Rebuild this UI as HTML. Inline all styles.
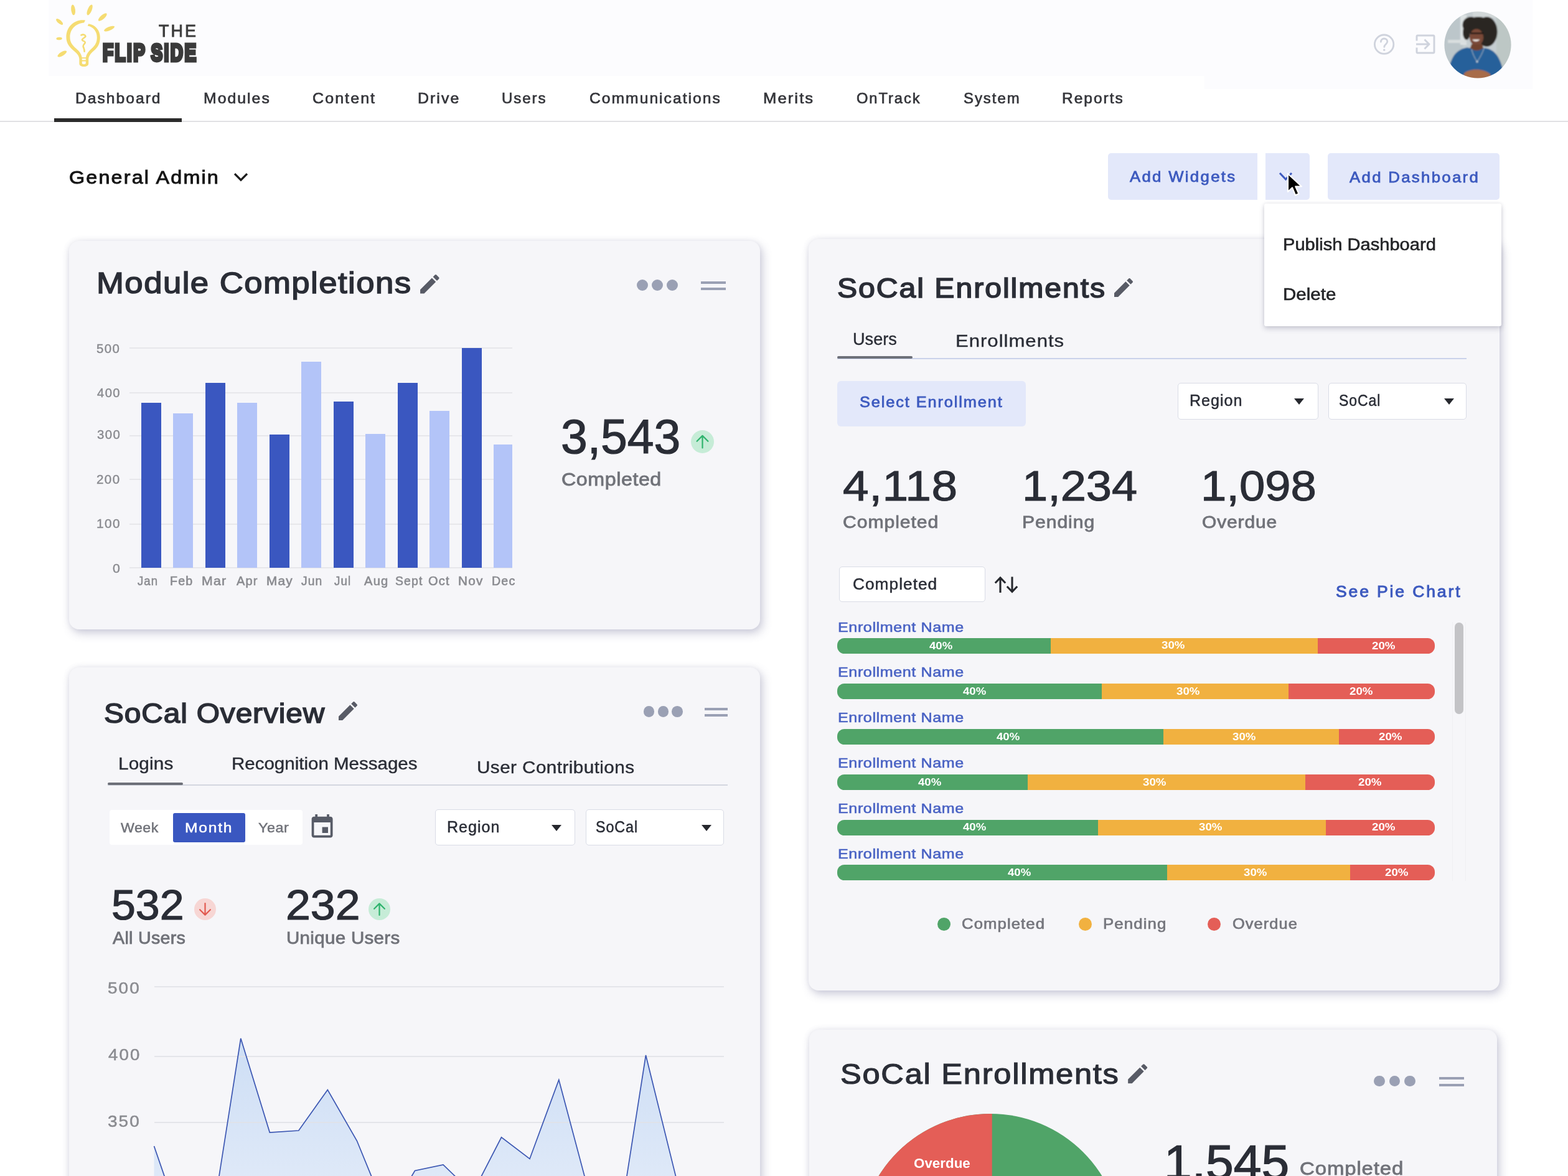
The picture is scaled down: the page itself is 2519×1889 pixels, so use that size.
<!DOCTYPE html>
<html lang="en">
<head>
<meta charset="utf-8">
<title>General Admin Dashboard</title>
<style>
html,body{margin:0;padding:0;background:#fff;}
body{width:2519px;height:1889px;overflow:hidden;position:relative;font-family:"Liberation Sans",sans-serif;}
#app{position:absolute;left:0;top:0;width:2519px;height:1889px;overflow:hidden;}
#app div,#app .t,#app svg{position:absolute;}
header,nav,main,section,aside{display:block;margin:0;padding:0;}
.t{white-space:nowrap;line-height:1;display:block;transform-origin:0 0;margin:0;padding:0;font-weight:400;text-decoration:none;}
.card{background:#f6f6f9;border-radius:16px;box-shadow:4px 6px 15px rgba(95,95,140,.31),-1px 0 8px rgba(95,95,140,.10);}
</style>
</head>
<body>
<div id="app">
<header>
<div style="left:78px;top:0px;width:1857px;height:122px;background:#fcfcfe;"></div>
<div style="left:1935px;top:0px;width:527px;height:143px;background:#fcfcfe;"></div>
<svg style="left:80px;top:0px" width="120" height="115" viewBox="80 0 120 115"><g fill="#f5dc72"><ellipse cx="117.6" cy="15.9" rx="8.5" ry="3.3" transform="rotate(83.2 117.6 15.9)"/><ellipse cx="144.1" cy="15.9" rx="9.1" ry="3.3" transform="rotate(112.6 144.1 15.9)"/><ellipse cx="164.8" cy="27.5" rx="8.7" ry="3.2" transform="rotate(139.0 164.8 27.5)"/><ellipse cx="175.6" cy="46.1" rx="9.1" ry="3.0" transform="rotate(157.4 175.6 46.1)"/><ellipse cx="95.6" cy="34.9" rx="6.9" ry="2.8" transform="rotate(40.9 95.6 34.9)"/><ellipse cx="95.1" cy="62.0" rx="4.7" ry="2.3" transform="rotate(-4.3 95.1 62.0)"/><ellipse cx="99.8" cy="86.5" rx="8.4" ry="3.1" transform="rotate(-30.8 99.8 86.5)"/><path d="M137 32.6c-15-2.600-30.600 8.400-30.600 27 0 10.400 5.600 16.600 12.600 22.400 5.600 4.600 8.400 8.600 8.400 13.400v6.800c0 3 3 4.800 7.400 4.800s7.400-1.800 7.400-4.800v-6.400c0-5.200 3-9.400 8.600-14.200 6.400-5.400 10-11.800 10-21.600 0-11-7-20-18.600-21.800l-1.400 3.400c9 1.600 15 9 15 18.600 0 8-3.200 13-8.600 17.800-6 5.200-9.400 10.400-9.400 17v6.600c0 1-1.200 1.600-3 1.600s-3-.6-3-1.600v-6.800c0-6.600-3.600-11.800-9.400-16.800-5.600-4.800-10-9.600-10-18.200 0-14 10.800-22.400 22.600-23.200z"/><path d="M130 92.200h10.600v1.800H130zM130.400 96.600h9.800v1.800h-9.800z"/></g><path d="M130.400 56.400c3-1.600 6.400-.4 7 1.600s-4.800 3.200-5.400 5.600 4.600 2 4.800 4.400-3.600 3.400-3.200 6.200 2.200 4.400 2 8.600" fill="none" stroke="#f5dc72" stroke-width="2.600" stroke-linecap="round"/></svg>
<span class="t" style="left:255.35px;top:37.16px;font-size:26.86px;letter-spacing:3.0px;color:#3c3c3c;-webkit-text-stroke:0.9px #3c3c3c;transform:scaleX(1.0021);">THE</span>
<span class="t" style="left:165px;top:64.5px;font-size:39.5px;font-weight:700;color:#3a3a3a;-webkit-text-stroke:5px #3a3a3a;letter-spacing:3.5px;word-spacing:-4px;transform:scaleX(.708)">FLIP SIDE</span>
<nav aria-label="Main">
<a class="t" style="left:120.86px;top:146.4px;font-size:24.33px;letter-spacing:2.0px;color:#34353a;-webkit-text-stroke:0.7px #34353a;transform:scaleX(1.0113);">Dashboard</a>
<a class="t" style="left:326.65px;top:146.4px;font-size:24.33px;letter-spacing:2.0px;color:#34353a;-webkit-text-stroke:0.7px #34353a;transform:scaleX(1.0177);">Modules</a>
<a class="t" style="left:501.7px;top:146.4px;font-size:24.33px;letter-spacing:2.0px;color:#34353a;-webkit-text-stroke:0.7px #34353a;transform:scaleX(1.0295);">Content</a>
<a class="t" style="left:670.94px;top:146.4px;font-size:24.33px;letter-spacing:2.0px;color:#34353a;-webkit-text-stroke:0.7px #34353a;transform:scaleX(1.0229);">Drive</a>
<a class="t" style="left:805.9px;top:146.4px;font-size:24.33px;letter-spacing:2.0px;color:#34353a;-webkit-text-stroke:0.7px #34353a;transform:scaleX(0.9861);">Users</a>
<a class="t" style="left:946.62px;top:146.4px;font-size:24.33px;letter-spacing:2.0px;color:#34353a;-webkit-text-stroke:0.7px #34353a;transform:scaleX(1.0128);">Communications</a>
<a class="t" style="left:1225.7px;top:146.4px;font-size:24.33px;letter-spacing:2.0px;color:#34353a;-webkit-text-stroke:0.7px #34353a;transform:scaleX(1.0517);">Merits</a>
<a class="t" style="left:1375.95px;top:146.4px;font-size:24.33px;letter-spacing:2.0px;color:#34353a;-webkit-text-stroke:0.7px #34353a;transform:scaleX(0.9737);">OnTrack</a>
<a class="t" style="left:1547.86px;top:146.4px;font-size:24.33px;letter-spacing:2.0px;color:#34353a;-webkit-text-stroke:0.7px #34353a;transform:scaleX(0.9833);">System</a>
<a class="t" style="left:1706.07px;top:146.4px;font-size:24.33px;letter-spacing:2.0px;color:#34353a;-webkit-text-stroke:0.7px #34353a;transform:scaleX(1.0061);">Reports</a>
</nav>
<div style="left:0px;top:194px;width:2519px;height:2px;background:#e1e1e4;"></div>
<div style="left:87px;top:190px;width:205px;height:6px;background:#2b2b2b;"></div>
<svg style="left:2203px;top:51px" width="41" height="41" viewBox="0 0 41 41"><g fill="none" stroke="#cfd3dd" stroke-width="2.800" stroke-linecap="round"><circle cx="20.6" cy="20.2" r="15.2"/><path d="M15.400 16.200c0-3.200 2.300-5.200 5.200-5.200s5.200 2 5.200 4.800c0 4-5 4.300-5 8.600"/></g><circle cx="20.700" cy="29.300" r="1.700" fill="#d0d4de"/></svg>
<svg style="left:2270px;top:52px" width="40" height="38" viewBox="0 0 40 38"><g fill="none" stroke="#cfd3dd" stroke-width="2.900" stroke-linejoin="round"><path d="M6 13.500V6.500a1.500 1.500 0 0 1 1.500-1.500h25a1.500 1.500 0 0 1 1.500 1.500v25a1.500 1.500 0 0 1-1.500 1.500h-25a1.500 1.500 0 0 1-1.500-1.500v-7"/><path d="M5 19h21M18.500 11.500l7.500 7.500-7.500 7.500"/></g></svg>
<svg style="left:2319.7px;top:18.3px" width="108" height="108" viewBox="0 0 108 108"><defs><clipPath id="av"><circle cx="54" cy="54" r="53.600"/></clipPath><filter id="avb" x="-10%" y="-10%" width="120%" height="120%"><feGaussianBlur stdDeviation="1"/></filter></defs><g clip-path="url(#av)"><g filter="url(#avb)"><rect x="-6" y="-6" width="120" height="120" fill="#c6ced1"/><rect x="-6" y="-6" width="36" height="120" fill="#bcc6ca"/><rect x="26" y="6" width="10" height="48" fill="#dde2e3"/><rect x="46" y="-6" width="40" height="16" fill="#d2d8d9"/><rect x="84" y="-6" width="30" height="120" fill="#bdc7c5"/><rect x="6" y="46" width="30" height="5" fill="#d9dedf"/><ellipse cx="43" cy="22" rx="13.500" ry="13" fill="#2b2523"/><ellipse cx="68.500" cy="33" rx="17" ry="24" fill="#2b2523"/><ellipse cx="55" cy="20" rx="17" ry="11" fill="#2b2523"/><ellipse cx="36" cy="34" rx="6" ry="12" fill="#2b2523"/><ellipse cx="52" cy="42" rx="11" ry="13.500" fill="#7a4a37"/><path d="M44 53h17l3 9-11 9-12-9z" fill="#71432f"/><path d="M6 114c1-30 7-50 28-55 5-1 8 0 11 2 4 3 10 3 15 0 3-2 6-2 10-1 17 5 24 24 28 54z" fill="#27619a"/><path d="M44 61c2 8 5 14 9 20M64 60c-3 8-6 14-11 21" fill="none" stroke="#a9b9c6" stroke-width="1"/><circle cx="53" cy="81" r="1.600" fill="#c9d3da"/><path d="M32 100c8-8 30-9 42 1l3 14H30z" fill="#a86c49"/><path d="M42 35.500h21" stroke="#1a1716" stroke-width="2.400"/><path d="M45 45.500c3 4 9 4 12.500 0z" fill="#f3efec"/></g></g></svg>
</header>
<main>
<section aria-label="Dashboard toolbar">
<h1 class="t" style="left:111.0px;top:269.5px;font-size:29.77px;letter-spacing:2.0px;color:#141414;-webkit-text-stroke:0.9px #141414;transform:scaleX(1.0856);">General Admin</h1>
<svg style="left:372px;top:272px" width="30" height="24" viewBox="0 0 30 24"><path d="M5 7.200l10 10 10-10" fill="none" stroke="#1c1c1c" stroke-width="3.300"/></svg>
<div style="left:1780px;top:246px;width:240px;height:75px;background:#e3e8fa;border-radius:5px 0 0 5px;"></div>
<div style="left:2032.5px;top:246px;width:71.5px;height:75px;background:#e3e8fa;border-radius:0 5px 5px 0;"></div>
<div style="left:2133px;top:246px;width:275.5px;height:75px;background:#e3e8fa;border-radius:5px;"></div>
<span class="t" style="left:1815.12px;top:271.58px;font-size:24.36px;letter-spacing:2.2px;color:#3d5abf;-webkit-text-stroke:0.8px #3d5abf;transform:scaleX(1.0562);">Add Widgets</span>
<span class="t" style="left:2168.42px;top:273.18px;font-size:24.36px;letter-spacing:2.2px;color:#3d5abf;-webkit-text-stroke:0.8px #3d5abf;transform:scaleX(1.0568);">Add Dashboard</span>
<svg style="left:2050px;top:270px" width="32" height="26" viewBox="0 0 32 26"><path d="M6 8l9.5 10 9.5-10" fill="none" stroke="#3d5abf" stroke-width="3"/></svg>
</section>
<section aria-label="Module Completions">
<div class="card" style="left:110.5px;top:387.2px;width:1110.5px;height:624.3px"></div>
<h2 class="t" style="left:155.1px;top:430.69px;font-size:47.97px;letter-spacing:1.29px;color:#2a2d36;-webkit-text-stroke:1.5px #2a2d36;transform:scaleX(1.1);">Module Completions</h2>
<svg style="left:669.92px;top:435.92px" width="40.67" height="40.67" viewBox="0 0 24 24"><path fill="#585b66" d="M3 17.25V21h3.75L17.81 9.94l-3.75-3.75L3 17.25zM20.71 7.04c.39-.39.39-1.02 0-1.41l-2.34-2.34c-.39-.39-1.02-.39-1.41 0l-1.83 1.83 3.75 3.75 1.83-1.83z"/></svg>
<div style="left:1023.0px;top:449.4px;width:18.0px;height:18.0px;background:#9aa0b4;border-radius:9.0px;"></div>
<div style="left:1047.0px;top:449.4px;width:18.0px;height:18.0px;background:#9aa0b4;border-radius:9.0px;"></div>
<div style="left:1071.3px;top:449.4px;width:18.0px;height:18.0px;background:#9aa0b4;border-radius:9.0px;"></div>
<div style="left:1126.4px;top:452.29999999999995px;width:39.3px;height:4.2px;background:#9aa0b4;"></div>
<div style="left:1126.4px;top:462.2px;width:39.3px;height:4.2px;background:#9aa0b4;"></div>
<div style="left:207.5px;top:558.2px;width:615.5px;height:2.0px;background:#e7e7eb;"></div>
<span class="t" style="left:155.45px;top:551.41px;font-size:19.6px;letter-spacing:1.4px;color:#8a8b90;-webkit-text-stroke:0.45px #8a8b90;transform:scaleX(1.0419);">500</span>
<div style="left:207.5px;top:630.1px;width:615.5px;height:2.0px;background:#e7e7eb;"></div>
<span class="t" style="left:155.85px;top:621.71px;font-size:19.6px;letter-spacing:1.4px;color:#8a8b90;-webkit-text-stroke:0.45px #8a8b90;transform:scaleX(1.0308);">400</span>
<div style="left:207.5px;top:698.5px;width:615.5px;height:2.0px;background:#e7e7eb;"></div>
<span class="t" style="left:155.58px;top:689.21px;font-size:19.6px;letter-spacing:1.4px;color:#8a8b90;-webkit-text-stroke:0.45px #8a8b90;transform:scaleX(1.0382);">300</span>
<div style="left:207.5px;top:769.2px;width:615.5px;height:2.0px;background:#e7e7eb;"></div>
<span class="t" style="left:155.32px;top:761.41px;font-size:19.6px;letter-spacing:1.4px;color:#8a8b90;-webkit-text-stroke:0.45px #8a8b90;transform:scaleX(1.0457);">200</span>
<div style="left:207.5px;top:841px;width:615.5px;height:2px;background:#e7e7eb;"></div>
<span class="t" style="left:154.78px;top:832.11px;font-size:19.6px;letter-spacing:1.4px;color:#8a8b90;-webkit-text-stroke:0.45px #8a8b90;transform:scaleX(1.0611);">100</span>
<div style="left:207.5px;top:910.5px;width:615.5px;height:2.0px;background:#e7e7eb;"></div>
<span class="t" style="left:180.63px;top:903.71px;font-size:19.6px;letter-spacing:0px;color:#8a8b90;-webkit-text-stroke:0.45px #8a8b90;transform:scaleX(1.0854);">0</span>
<div style="left:227px;top:646.5px;width:32px;height:265.5px;background:#3a57c0;"></div>
<div style="left:278px;top:664.3px;width:32px;height:247.7px;background:#b3c4f8;"></div>
<div style="left:330px;top:615px;width:32px;height:297px;background:#3a57c0;"></div>
<div style="left:381px;top:646.5px;width:32px;height:265.5px;background:#b3c4f8;"></div>
<div style="left:433px;top:697.5px;width:32px;height:214.5px;background:#3a57c0;"></div>
<div style="left:484px;top:581.3px;width:32px;height:330.7px;background:#b3c4f8;"></div>
<div style="left:536px;top:645.3px;width:32px;height:266.7px;background:#3a57c0;"></div>
<div style="left:587px;top:697px;width:32px;height:215px;background:#b3c4f8;"></div>
<div style="left:639px;top:615px;width:32px;height:297px;background:#3a57c0;"></div>
<div style="left:690px;top:660px;width:32px;height:252px;background:#b3c4f8;"></div>
<div style="left:742px;top:559px;width:32px;height:353px;background:#3a57c0;"></div>
<div style="left:793px;top:713.7px;width:30px;height:198.3px;background:#b3c4f8;"></div>
<span class="t" style="left:220.85px;top:922.87px;font-size:20px;letter-spacing:1.2px;color:#8a8b90;-webkit-text-stroke:0.6px #8a8b90;transform:scaleX(0.9245);">Jan</span>
<span class="t" style="left:273.3px;top:922.87px;font-size:20px;letter-spacing:1.2px;color:#8a8b90;-webkit-text-stroke:0.6px #8a8b90;transform:scaleX(0.9803);">Feb</span>
<span class="t" style="left:323.59px;top:922.87px;font-size:20px;letter-spacing:1.2px;color:#8a8b90;-webkit-text-stroke:0.6px #8a8b90;transform:scaleX(1.0638);">Mar</span>
<span class="t" style="left:380.0px;top:922.87px;font-size:20px;letter-spacing:1.2px;color:#8a8b90;-webkit-text-stroke:0.6px #8a8b90;transform:scaleX(0.9989);">Apr</span>
<span class="t" style="left:428.43px;top:922.87px;font-size:20px;letter-spacing:1.2px;color:#8a8b90;-webkit-text-stroke:0.6px #8a8b90;transform:scaleX(1.0368);">May</span>
<span class="t" style="left:483.65px;top:922.87px;font-size:20px;letter-spacing:1.2px;color:#8a8b90;-webkit-text-stroke:0.6px #8a8b90;transform:scaleX(0.9601);">Jun</span>
<span class="t" style="left:537.45px;top:922.87px;font-size:20px;letter-spacing:1.2px;color:#8a8b90;-webkit-text-stroke:0.6px #8a8b90;transform:scaleX(0.9334);">Jul</span>
<span class="t" style="left:585.3px;top:922.87px;font-size:20px;letter-spacing:1.2px;color:#8a8b90;-webkit-text-stroke:0.6px #8a8b90;transform:scaleX(1.007);">Aug</span>
<span class="t" style="left:635.24px;top:922.87px;font-size:20px;letter-spacing:1.2px;color:#8a8b90;-webkit-text-stroke:0.6px #8a8b90;transform:scaleX(0.9682);">Sept</span>
<span class="t" style="left:688.12px;top:922.87px;font-size:20px;letter-spacing:1.2px;color:#8a8b90;-webkit-text-stroke:0.6px #8a8b90;transform:scaleX(1.0006);">Oct</span>
<span class="t" style="left:736.43px;top:922.87px;font-size:20px;letter-spacing:1.2px;color:#8a8b90;-webkit-text-stroke:0.6px #8a8b90;transform:scaleX(1.0341);">Nov</span>
<span class="t" style="left:790.0px;top:922.87px;font-size:20px;letter-spacing:1.2px;color:#8a8b90;-webkit-text-stroke:0.6px #8a8b90;transform:scaleX(0.9797);">Dec</span>
<span class="t" style="left:901.2px;top:663.32px;font-size:77px;letter-spacing:0.0px;color:#2a2d36;-webkit-text-stroke:1.2px #2a2d36;transform:scaleX(0.9981);">3,543</span>
<svg style="left:1109.7px;top:691.0px" width="37" height="37" viewBox="0 0 37 37"><circle cx="18.5" cy="18.5" r="18.5" fill="#c6ecd7"/><path d="M18.5 28.490000000000002V9.25M9.620000000000001 17.76L18.5 8.879999999999999L27.38 17.76" fill="none" stroke="#2fb36d" stroke-width="2.2" stroke-linecap="round" stroke-linejoin="round"/></svg>
<span class="t" style="left:901.8px;top:755.35px;font-size:29.59px;letter-spacing:0.5px;color:#707279;-webkit-text-stroke:0.8px #707279;transform:scaleX(1.0902);">Completed</span>
</section>
<section aria-label="SoCal Overview">
<div class="card" style="left:110.5px;top:1072px;width:1110.5px;height:900px"></div>
<h2 class="t" style="left:166.97px;top:1124.49px;font-size:44.07px;letter-spacing:0.8px;color:#2a2d36;-webkit-text-stroke:1.6px #2a2d36;transform:scaleX(1.0856);">SoCal Overview</h2>
<svg style="left:539.0px;top:1121.5px" width="40.0" height="40.0" viewBox="0 0 24 24"><path fill="#585b66" d="M3 17.25V21h3.75L17.81 9.94l-3.75-3.75L3 17.25zM20.71 7.04c.39-.39.39-1.02 0-1.41l-2.34-2.34c-.39-.39-1.02-.39-1.41 0l-1.83 1.83 3.75 3.75 1.83-1.83z"/></svg>
<div style="left:1033.95px;top:1134.25px;width:17.5px;height:17.5px;background:#9aa0b4;border-radius:8.75px;"></div>
<div style="left:1056.75px;top:1134.25px;width:17.5px;height:17.5px;background:#9aa0b4;border-radius:8.75px;"></div>
<div style="left:1079.45px;top:1134.25px;width:17.5px;height:17.5px;background:#9aa0b4;border-radius:8.75px;"></div>
<div style="left:1131.9px;top:1137.2px;width:36.9px;height:4.2px;background:#9aa0b4;"></div>
<div style="left:1131.9px;top:1147.2px;width:36.9px;height:4.2px;background:#9aa0b4;"></div>
<span class="t" style="left:189.58px;top:1213.94px;font-size:27.01px;letter-spacing:0.15px;color:#2a2d36;-webkit-text-stroke:0.4px #2a2d36;transform:scaleX(1.1);">Logins</span>
<span class="t" style="left:372.4px;top:1213.94px;font-size:27.01px;letter-spacing:0.0px;color:#2a2d36;-webkit-text-stroke:0.4px #2a2d36;transform:scaleX(1.0926);">Recognition Messages</span>
<span class="t" style="left:765.62px;top:1220.04px;font-size:27.01px;letter-spacing:0.38px;color:#2a2d36;-webkit-text-stroke:0.4px #2a2d36;transform:scaleX(1.1);">User Contributions</span>
<div style="left:172.8px;top:1259.6px;width:996.6px;height:2.2px;background:#d3d6e0;"></div>
<div style="left:172.8px;top:1257px;width:121.5px;height:4.2px;background:#6d7079;border-radius:2px;"></div>
<div style="left:176px;top:1300.7px;width:309.8px;height:56.6px;background:#fff;border-radius:4px;"></div>
<div style="left:278.3px;top:1306px;width:115.9px;height:46.6px;background:#3a57c0;border-radius:3px;"></div>
<span class="t" style="left:193.96px;top:1319.26px;font-size:22.38px;letter-spacing:0.5px;color:#707279;-webkit-text-stroke:0.5px #707279;transform:scaleX(1.0347);">Week</span>
<span class="t" style="left:297.25px;top:1319.26px;font-size:22.38px;letter-spacing:1.6px;color:#fff;-webkit-text-stroke:0.5px #fff;transform:scaleX(1.1);">Month</span>
<span class="t" style="left:414.87px;top:1319.26px;font-size:22.38px;letter-spacing:0.5px;color:#707279;-webkit-text-stroke:0.5px #707279;transform:scaleX(1.0448);">Year</span>
<svg style="left:494.9px;top:1305.5px" width="45.2" height="45.2" viewBox="0 0 24 24"><path fill="#575b67" d="M17 12h-5v5h5v-5zM16 1v2H8V1H6v2H5c-1.11 0-1.99.9-1.99 2L3 19c0 1.1.89 2 2 2h14c1.1 0 2-.9 2-2V5c0-1.1-.9-2-2-2h-1V1h-2zm3 18H5V8h14v11z"/></svg>
<div style="left:699px;top:1299.8px;width:225.4px;height:58.4px;background:#fff;border-radius:5px;box-sizing:border-box;border:1.5px solid #d9dce6;"></div>
<span class="t" style="left:718.25px;top:1315.54px;font-size:25.0px;letter-spacing:1.0px;color:#2a2d36;-webkit-text-stroke:0.5px #2a2d36;transform:scaleX(1.0025);">Region</span>
<svg style="left:886px;top:1325.0px" width="16" height="10" viewBox="0 0 16 10"><path d="M0 0h16L8 10z" fill="#26282e"/></svg>
<div style="left:941.3px;top:1299.8px;width:221.3px;height:58.4px;background:#fff;border-radius:5px;box-sizing:border-box;border:1.5px solid #d9dce6;"></div>
<span class="t" style="left:957.39px;top:1315.54px;font-size:25.0px;letter-spacing:1.0px;color:#2a2d36;-webkit-text-stroke:0.5px #2a2d36;transform:scaleX(0.9312);">SoCal</span>
<svg style="left:1126.6px;top:1325.0px" width="16" height="10" viewBox="0 0 16 10"><path d="M0 0h16L8 10z" fill="#26282e"/></svg>
<span class="t" style="left:179.23px;top:1419.24px;font-size:68px;letter-spacing:0.0px;color:#2a2d36;-webkit-text-stroke:1.2px #2a2d36;transform:scaleX(1.0276);">532</span>
<svg style="left:312.0px;top:1442.5px" width="35" height="35" viewBox="0 0 35 35"><circle cx="17.5" cy="17.5" r="17.5" fill="#f7d6d4"/><path transform="rotate(180 17.5 17.5)" d="M17.5 26.950000000000003V8.75M9.1 16.8L17.5 8.4L25.9 16.8" fill="none" stroke="#e2594f" stroke-width="2.2" stroke-linecap="round" stroke-linejoin="round"/></svg>
<span class="t" style="left:181.22px;top:1493.12px;font-size:27.27px;letter-spacing:0.3px;color:#707279;-webkit-text-stroke:0.8px #707279;transform:scaleX(1.0484);">All Users</span>
<span class="t" style="left:459.27px;top:1419.24px;font-size:68px;letter-spacing:0.0px;color:#2a2d36;-webkit-text-stroke:1.2px #2a2d36;transform:scaleX(1.0532);">232</span>
<svg style="left:591.5px;top:1443.0px" width="35" height="35" viewBox="0 0 35 35"><circle cx="17.5" cy="17.5" r="17.5" fill="#c6ecd7"/><path d="M17.5 26.950000000000003V8.75M9.1 16.8L17.5 8.4L25.9 16.8" fill="none" stroke="#2fb36d" stroke-width="2.2" stroke-linecap="round" stroke-linejoin="round"/></svg>
<span class="t" style="left:460.27px;top:1493.12px;font-size:27.27px;letter-spacing:0.3px;color:#707279;-webkit-text-stroke:0.8px #707279;transform:scaleX(1.0816);">Unique Users</span>
<svg style="left:240px;top:1640px" width="940" height="249" viewBox="0 0 940 249"><defs><linearGradient id="ag" x1="0" y1="0" x2="0" y2="1"><stop offset="0" stop-color="#cddef5"/><stop offset="1" stop-color="#dfe9f8"/></linearGradient></defs><path d="M7.5 201.0 L24.0 249.0 L24.0 260.0 L112.0 260.0 L112.0 249.0 L146.8 28.0 L193.3 179.0 L239.8 176.0 L286.3 110.6 L333.4 192.5 L356.5 249.0 L356.5 260.0 L421.5 260.0 L421.5 249.0 L426.5 240.5 L472.0 231.0 L490.8 249.0 L490.8 260.0 L533.5 260.0 L533.5 249.0 L565.5 186.8 L611.0 221.5 L657.8 94.5 L699.0 249.0 L699.0 260.0 L767.0 260.0 L767.0 249.0 L797.5 55.0 L845.5 249.0 L845.5 260.0 L7.5 260Z" fill="url(#ag)" stroke="none"/></svg>
<div style="left:247.5px;top:1584px;width:915.5px;height:2px;background:rgba(225,226,232,.85);"></div>
<span class="t" style="left:173.01px;top:1574.27px;font-size:26.5px;letter-spacing:2.0px;color:#8a8b90;-webkit-text-stroke:0.5px #8a8b90;transform:scaleX(1.0529);">500</span>
<div style="left:247.5px;top:1696.2px;width:915.5px;height:2.0px;background:rgba(225,226,232,.85);"></div>
<span class="t" style="left:173.54px;top:1680.97px;font-size:26.5px;letter-spacing:2.0px;color:#8a8b90;-webkit-text-stroke:0.5px #8a8b90;transform:scaleX(1.0418);">400</span>
<div style="left:247.5px;top:1801.7px;width:915.5px;height:2.0px;background:rgba(225,226,232,.85);"></div>
<span class="t" style="left:173.01px;top:1787.57px;font-size:26.5px;letter-spacing:2.0px;color:#8a8b90;-webkit-text-stroke:0.5px #8a8b90;transform:scaleX(1.0529);">350</span>
<svg style="left:240px;top:1640px" width="940" height="249" viewBox="0 0 940 249"><path d="M7.5 201.0 L24.0 249.0 L24.0 260.0 L112.0 260.0 L112.0 249.0 L146.8 28.0 L193.3 179.0 L239.8 176.0 L286.3 110.6 L333.4 192.5 L356.5 249.0 L356.5 260.0 L421.5 260.0 L421.5 249.0 L426.5 240.5 L472.0 231.0 L490.8 249.0 L490.8 260.0 L533.5 260.0 L533.5 249.0 L565.5 186.8 L611.0 221.5 L657.8 94.5 L699.0 249.0 L699.0 260.0 L767.0 260.0 L767.0 249.0 L797.5 55.0 L845.5 249.0 L845.5 260.0" fill="none" stroke="#3b56b2" stroke-width="1.7" stroke-linejoin="miter"/></svg>
</section>
<section aria-label="SoCal Enrollments by user">
<div class="card" style="left:1298.8px;top:384px;width:1110.2px;height:1206.7px"></div>
<h2 class="t" style="left:1345.38px;top:441.14px;font-size:43.78px;letter-spacing:1.79px;color:#2a2d36;-webkit-text-stroke:1.6px #2a2d36;transform:scaleX(1.1);">SoCal Enrollments</h2>
<svg style="left:1785.3px;top:441.5px" width="40.0" height="40.0" viewBox="0 0 24 24"><path fill="#585b66" d="M3 17.25V21h3.75L17.81 9.94l-3.75-3.75L3 17.25zM20.71 7.04c.39-.39.39-1.02 0-1.41l-2.34-2.34c-.39-.39-1.02-.39-1.41 0l-1.83 1.83 3.75 3.75 1.83-1.83z"/></svg>
<span class="t" style="left:1369.8px;top:531.32px;font-size:27.15px;letter-spacing:0.0px;color:#2a2d36;-webkit-text-stroke:0.4px #2a2d36;transform:scaleX(0.9994);">Users</span>
<span class="t" style="left:1535.34px;top:532.74px;font-size:28.31px;letter-spacing:0.89px;color:#2a2d36;-webkit-text-stroke:0.4px #2a2d36;transform:scaleX(1.1);">Enrollments</span>
<div style="left:1345.2px;top:574.6px;width:1011.1px;height:2.0px;background:#cad2ea;"></div>
<div style="left:1345.2px;top:571.6px;width:121.1px;height:4.6px;background:#6d7079;border-radius:2px;"></div>
<div style="left:1344.6px;top:611.6px;width:303.4px;height:73.4px;background:#e3e8fa;border-radius:6px;"></div>
<span class="t" style="left:1381.37px;top:633.7px;font-size:24.22px;letter-spacing:1.8px;color:#3d5abf;-webkit-text-stroke:0.8px #3d5abf;transform:scaleX(1.0467);">Select Enrollment</span>
<div style="left:1892.2px;top:614.8px;width:225.6px;height:58.9px;background:#fff;border-radius:5px;box-sizing:border-box;border:1.5px solid #d9dce6;"></div>
<span class="t" style="left:1911.25px;top:631.34px;font-size:25.0px;letter-spacing:1.0px;color:#2a2d36;-webkit-text-stroke:0.5px #2a2d36;transform:scaleX(1.0025);">Region</span>
<svg style="left:2079.4px;top:640.25px" width="16" height="10" viewBox="0 0 16 10"><path d="M0 0h16L8 10z" fill="#26282e"/></svg>
<div style="left:2134px;top:614.8px;width:221.7px;height:58.9px;background:#fff;border-radius:5px;box-sizing:border-box;border:1.5px solid #d9dce6;"></div>
<span class="t" style="left:2150.79px;top:631.34px;font-size:25.0px;letter-spacing:1.0px;color:#2a2d36;-webkit-text-stroke:0.5px #2a2d36;transform:scaleX(0.9212);">SoCal</span>
<svg style="left:2319.8px;top:640.25px" width="16" height="10" viewBox="0 0 16 10"><path d="M0 0h16L8 10z" fill="#26282e"/></svg>
<span class="t" style="left:1354.14px;top:746.34px;font-size:68px;letter-spacing:0.56px;color:#2a2d36;-webkit-text-stroke:1.1px #2a2d36;transform:scaleX(1.1);">4,118</span>
<span class="t" style="left:1354.23px;top:825.3px;font-size:27.41px;letter-spacing:0.85px;color:#707279;-webkit-text-stroke:0.8px #707279;transform:scaleX(1.1);">Completed</span>
<span class="t" style="left:1641.78px;top:746.34px;font-size:68px;letter-spacing:0.0px;color:#2a2d36;-webkit-text-stroke:1.1px #2a2d36;transform:scaleX(1.0876);">1,234</span>
<span class="t" style="left:1641.8px;top:825.3px;font-size:27.41px;letter-spacing:0.84px;color:#707279;-webkit-text-stroke:0.8px #707279;transform:scaleX(1.1);">Pending</span>
<span class="t" style="left:1929.26px;top:746.34px;font-size:68px;letter-spacing:0.0px;color:#2a2d36;-webkit-text-stroke:1.1px #2a2d36;transform:scaleX(1.0916);">1,098</span>
<span class="t" style="left:1930.67px;top:825.3px;font-size:27.41px;letter-spacing:0.8px;color:#707279;-webkit-text-stroke:0.8px #707279;transform:scaleX(1.0927);">Overdue</span>
<div style="left:1348.2px;top:910px;width:234.6px;height:57.4px;background:#fff;border-radius:5px;box-sizing:border-box;border:1.5px solid #d9dce6;"></div>
<span class="t" style="left:1369.65px;top:925.64px;font-size:25.0px;letter-spacing:1.0px;color:#2a2d36;-webkit-text-stroke:0.5px #2a2d36;transform:scaleX(1.0488);">Completed</span>
<svg style="left:1594px;top:922px" width="46" height="34" viewBox="0 0 46 34"><path d="M13 30V6.500M4.800 14.500L13 6l8.200 8.500M32 4.500v24M23.800 20L32 28.500l8.200-8.500" fill="none" stroke="#26282e" stroke-width="3.1"/></svg>
<span class="t" style="left:2146.06px;top:938.4px;font-size:25.87px;letter-spacing:2.8px;color:#3d5abf;-webkit-text-stroke:1.0px #3d5abf;transform:scaleX(1.0255);">See Pie Chart</span>
<span class="t" style="left:1346.47px;top:995.66px;font-size:22.85px;letter-spacing:0.53px;color:#4a63c4;-webkit-text-stroke:0.6px #4a63c4;transform:scaleX(1.1);">Enrollment Name</span>
<div style="left:1345.4px;top:1025.3px;width:959.5999999999999px;height:25.0px;border-radius:11.5px;overflow:hidden;background:linear-gradient(90deg,#50a468 0,#50a468 343.2px,#f1b140 343.2px,#f1b140 772.3px,#e45e57 772.3px,#e45e57 100%)"></div>
<span class="t" style="left:1493.23px;top:1029.17px;font-size:17.4px;letter-spacing:0.0px;color:#fff;font-weight:700;transform:scaleX(1.0693);">40%</span>
<span class="t" style="left:1865.9px;top:1028.17px;font-size:17.4px;letter-spacing:0.0px;color:#fff;font-weight:700;transform:scaleX(1.0732);">30%</span>
<span class="t" style="left:2204.16px;top:1029.17px;font-size:17.4px;letter-spacing:0.0px;color:#fff;font-weight:700;transform:scaleX(1.0772);">20%</span>
<span class="t" style="left:1346.47px;top:1068.46px;font-size:22.85px;letter-spacing:0.53px;color:#4a63c4;-webkit-text-stroke:0.6px #4a63c4;transform:scaleX(1.1);">Enrollment Name</span>
<div style="left:1345.4px;top:1098.1px;width:959.5999999999999px;height:25.0px;border-radius:11.5px;overflow:hidden;background:linear-gradient(90deg,#50a468 0,#50a468 425.1px,#f1b140 425.1px,#f1b140 724.6px,#e45e57 724.6px,#e45e57 100%)"></div>
<span class="t" style="left:1547.03px;top:1101.97px;font-size:17.4px;letter-spacing:0.0px;color:#fff;font-weight:700;transform:scaleX(1.0693);">40%</span>
<span class="t" style="left:1889.6px;top:1101.97px;font-size:17.4px;letter-spacing:0.0px;color:#fff;font-weight:700;transform:scaleX(1.0732);">30%</span>
<span class="t" style="left:2167.76px;top:1101.97px;font-size:17.4px;letter-spacing:0.0px;color:#fff;font-weight:700;transform:scaleX(1.0772);">20%</span>
<span class="t" style="left:1346.47px;top:1141.26px;font-size:22.85px;letter-spacing:0.53px;color:#4a63c4;-webkit-text-stroke:0.6px #4a63c4;transform:scaleX(1.1);">Enrollment Name</span>
<div style="left:1345.4px;top:1170.9px;width:959.5999999999999px;height:25.0px;border-radius:11.5px;overflow:hidden;background:linear-gradient(90deg,#50a468 0,#50a468 524.2px,#f1b140 524.2px,#f1b140 806.5px,#e45e57 806.5px,#e45e57 100%)"></div>
<span class="t" style="left:1601.13px;top:1174.77px;font-size:17.4px;letter-spacing:0.0px;color:#fff;font-weight:700;transform:scaleX(1.0693);">40%</span>
<span class="t" style="left:1980.1px;top:1174.77px;font-size:17.4px;letter-spacing:0.0px;color:#fff;font-weight:700;transform:scaleX(1.0732);">30%</span>
<span class="t" style="left:2214.96px;top:1174.77px;font-size:17.4px;letter-spacing:0.0px;color:#fff;font-weight:700;transform:scaleX(1.0772);">20%</span>
<span class="t" style="left:1346.47px;top:1214.06px;font-size:22.85px;letter-spacing:0.53px;color:#4a63c4;-webkit-text-stroke:0.6px #4a63c4;transform:scaleX(1.1);">Enrollment Name</span>
<div style="left:1345.4px;top:1243.7px;width:959.5999999999999px;height:25.0px;border-radius:11.5px;overflow:hidden;background:linear-gradient(90deg,#50a468 0,#50a468 306.2px,#f1b140 306.2px,#f1b140 751.8px,#e45e57 751.8px,#e45e57 100%)"></div>
<span class="t" style="left:1474.83px;top:1247.57px;font-size:17.4px;letter-spacing:0.0px;color:#fff;font-weight:700;transform:scaleX(1.0693);">40%</span>
<span class="t" style="left:1835.5px;top:1247.57px;font-size:17.4px;letter-spacing:0.0px;color:#fff;font-weight:700;transform:scaleX(1.0732);">30%</span>
<span class="t" style="left:2181.96px;top:1247.57px;font-size:17.4px;letter-spacing:0.0px;color:#fff;font-weight:700;transform:scaleX(1.0772);">20%</span>
<span class="t" style="left:1346.47px;top:1286.86px;font-size:22.85px;letter-spacing:0.53px;color:#4a63c4;-webkit-text-stroke:0.6px #4a63c4;transform:scaleX(1.1);">Enrollment Name</span>
<div style="left:1345.4px;top:1316.5px;width:959.5999999999999px;height:25.0px;border-radius:11.5px;overflow:hidden;background:linear-gradient(90deg,#50a468 0,#50a468 419.4px,#f1b140 419.4px,#f1b140 785.4px,#e45e57 785.4px,#e45e57 100%)"></div>
<span class="t" style="left:1547.03px;top:1320.37px;font-size:17.4px;letter-spacing:0.0px;color:#fff;font-weight:700;transform:scaleX(1.0693);">40%</span>
<span class="t" style="left:1926.0px;top:1320.37px;font-size:17.4px;letter-spacing:0.0px;color:#fff;font-weight:700;transform:scaleX(1.0732);">30%</span>
<span class="t" style="left:2204.16px;top:1320.37px;font-size:17.4px;letter-spacing:0.0px;color:#fff;font-weight:700;transform:scaleX(1.0772);">20%</span>
<span class="t" style="left:1346.47px;top:1359.66px;font-size:22.85px;letter-spacing:0.53px;color:#4a63c4;-webkit-text-stroke:0.6px #4a63c4;transform:scaleX(1.1);">Enrollment Name</span>
<div style="left:1345.4px;top:1389.3px;width:959.5999999999999px;height:25.0px;border-radius:11.5px;overflow:hidden;background:linear-gradient(90deg,#50a468 0,#50a468 530.4px,#f1b140 530.4px,#f1b140 824.1px,#e45e57 824.1px,#e45e57 100%)"></div>
<span class="t" style="left:1619.43px;top:1393.17px;font-size:17.4px;letter-spacing:0.0px;color:#fff;font-weight:700;transform:scaleX(1.0693);">40%</span>
<span class="t" style="left:1998.3px;top:1393.17px;font-size:17.4px;letter-spacing:0.0px;color:#fff;font-weight:700;transform:scaleX(1.0732);">30%</span>
<span class="t" style="left:2225.16px;top:1393.17px;font-size:17.4px;letter-spacing:0.0px;color:#fff;font-weight:700;transform:scaleX(1.0772);">20%</span>
<div style="left:2332.5px;top:999px;width:1.0px;height:416px;background:#f0f0f3;"></div>
<div style="left:2353.5px;top:999px;width:1.0px;height:416px;background:#f0f0f3;"></div>
<div style="left:2337px;top:1000px;width:14px;height:147px;background:#c3c3c6;border-radius:7px;"></div>
<div style="left:1505.5px;top:1473.9px;width:21.0px;height:21.0px;background:#50a468;border-radius:10.5px;"></div>
<span class="t" style="left:1544.86px;top:1473.32px;font-size:23.6px;letter-spacing:1.0px;color:#75767d;-webkit-text-stroke:0.7px #75767d;transform:scaleX(1.089);">Completed</span>
<div style="left:1733.3px;top:1473.9px;width:21.0px;height:21.0px;background:#f1b140;border-radius:10.5px;"></div>
<span class="t" style="left:1771.73px;top:1473.32px;font-size:23.6px;letter-spacing:1.0px;color:#75767d;-webkit-text-stroke:0.7px #75767d;transform:scaleX(1.0941);">Pending</span>
<div style="left:1939.9px;top:1473.9px;width:21.0px;height:21.0px;background:#e45e57;border-radius:10.5px;"></div>
<span class="t" style="left:1979.8px;top:1473.32px;font-size:23.6px;letter-spacing:1.0px;color:#75767d;-webkit-text-stroke:0.7px #75767d;transform:scaleX(1.0765);">Overdue</span>
</section>
<section aria-label="SoCal Enrollments pie chart">
<div class="card" style="left:1299.5px;top:1654px;width:1105.5px;height:400px"></div>
<h2 class="t" style="left:1350.37px;top:1702.42px;font-size:46.28px;letter-spacing:1.6px;color:#2a2d36;-webkit-text-stroke:1.2px #2a2d36;transform:scaleX(1.0934);">SoCal Enrollments</h2>
<svg style="left:1807.23px;top:1703.83px" width="41.33" height="41.33" viewBox="0 0 24 24"><path fill="#585b66" d="M3 17.25V21h3.75L17.81 9.94l-3.75-3.75L3 17.25zM20.71 7.04c.39-.39.39-1.02 0-1.41l-2.34-2.34c-.39-.39-1.02-.39-1.41 0l-1.83 1.83 3.75 3.75 1.83-1.83z"/></svg>
<div style="left:2207.1px;top:1727.6px;width:17.8px;height:17.8px;background:#9aa0b4;border-radius:8.9px;"></div>
<div style="left:2231.7px;top:1727.6px;width:17.8px;height:17.8px;background:#9aa0b4;border-radius:8.9px;"></div>
<div style="left:2256.2px;top:1727.6px;width:17.8px;height:17.8px;background:#9aa0b4;border-radius:8.9px;"></div>
<div style="left:2312px;top:1729.9px;width:40px;height:4.2px;background:#9aa0b4;"></div>
<div style="left:2312px;top:1740.5px;width:40px;height:4.2px;background:#9aa0b4;"></div>
<svg style="left:1370px;top:1780px" width="450" height="109" viewBox="0 0 450 109"><circle cx="221" cy="220" r="211" fill="#50a468"/><path d="M223.700 220V9A211 211 0 0 0 10 220Z" fill="#e45e57"/></svg>
<span class="t" style="left:1468.14px;top:1857.41px;font-size:22.67px;letter-spacing:0.0px;color:#fff;font-weight:700;transform:scaleX(0.9871);">Overdue</span>
<span class="t" style="left:1870.04px;top:1828.05px;font-size:78.5px;letter-spacing:0.0px;color:#2a2d36;-webkit-text-stroke:1.3px #2a2d36;transform:scaleX(1.0245);">1,545</span>
<span class="t" style="left:2088.1px;top:1862.33px;font-size:30.32px;letter-spacing:0.8px;color:#707279;-webkit-text-stroke:0.8px #707279;transform:scaleX(1.0874);">Completed</span>
</section>
<aside aria-label="Dashboard actions menu">
<div style="left:2030.5px;top:326.5px;width:381.5px;height:197.0px;background:#fff;border-radius:3px;box-shadow:0 4px 9px rgba(60,60,90,.22),0 0 5px rgba(60,60,90,.10);"></div>
<span class="t" style="left:2060.64px;top:378.72px;font-size:27.5px;letter-spacing:0.0px;color:#242528;-webkit-text-stroke:0.6px #242528;transform:scaleX(1.0579);">Publish Dashboard</span>
<span class="t" style="left:2060.61px;top:458.72px;font-size:27.5px;letter-spacing:0.0px;color:#242528;-webkit-text-stroke:0.6px #242528;transform:scaleX(1.0734);">Delete</span>
<svg style="left:2064px;top:276px" width="30" height="42" viewBox="0 0 30 42"><path d="M5 3v29l7-6.500 5 12 5.500-2.300-5.200-11.700H27z" fill="#000" stroke="#fff" stroke-width="2.2" stroke-linejoin="round"/></svg>
</aside>
</main>
</div>
</body>
</html>
